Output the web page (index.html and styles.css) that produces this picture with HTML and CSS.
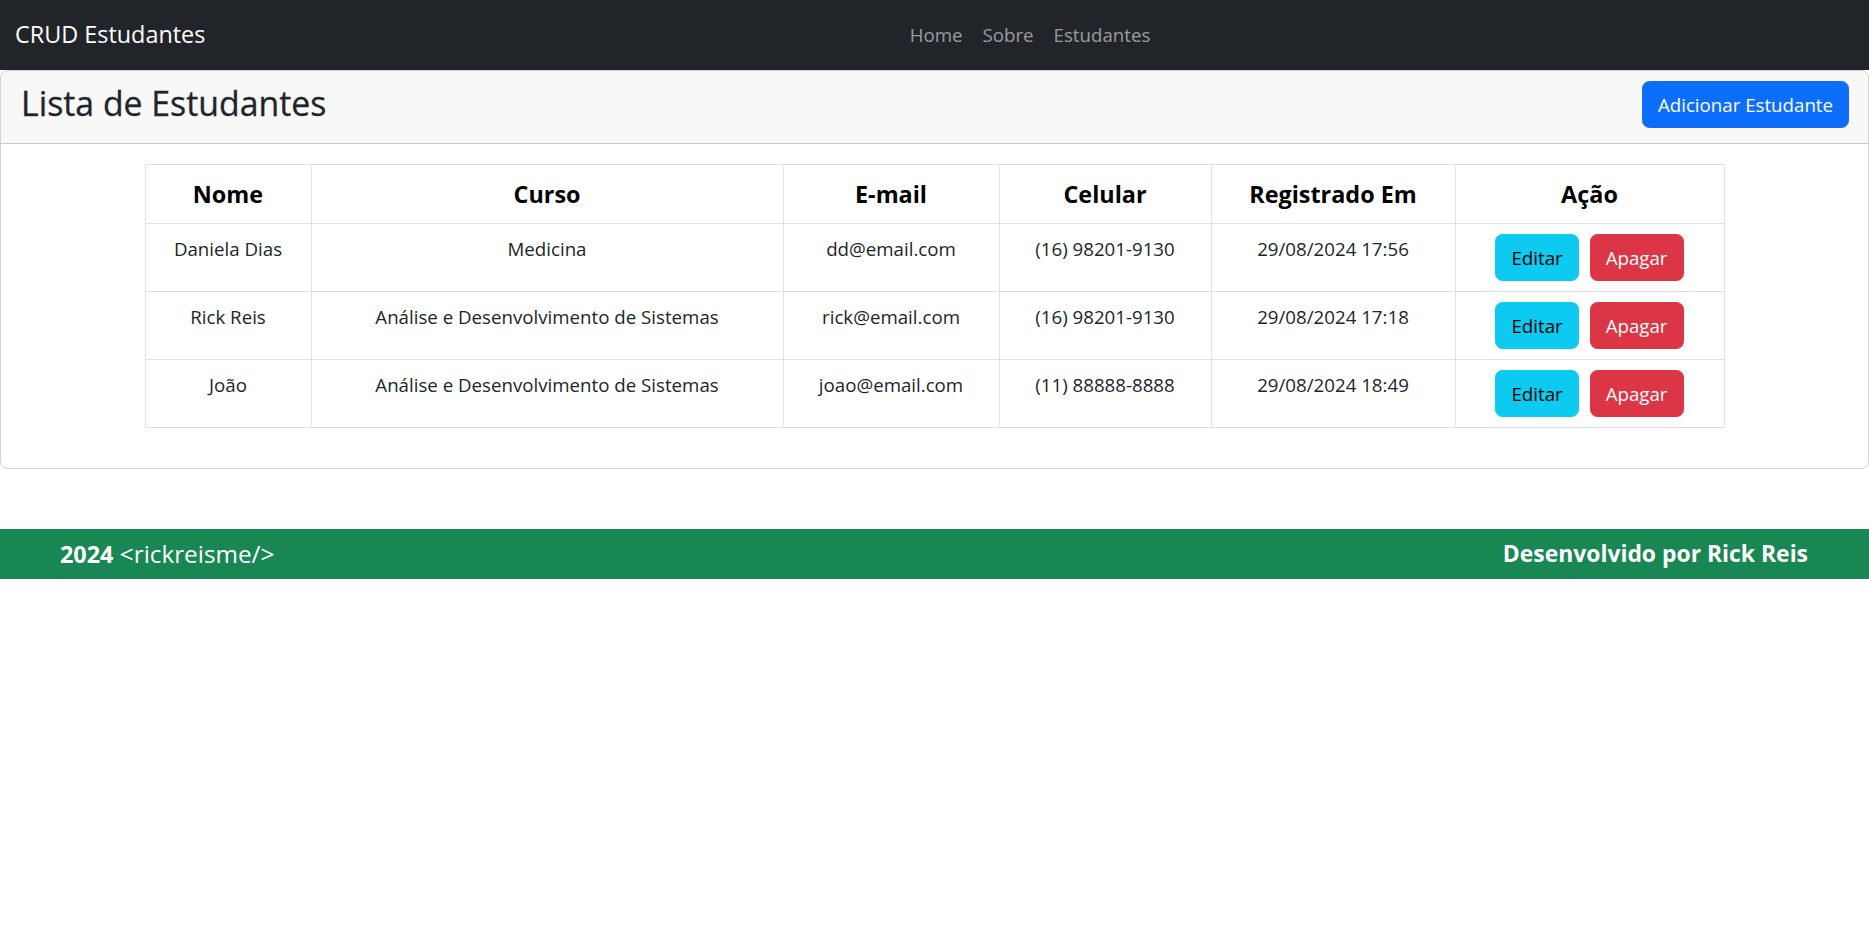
FILE: index.html
```html
<!DOCTYPE html>
<html lang="pt-BR">
<head>
<meta charset="utf-8">
<title>CRUD Estudantes</title>
<link rel="stylesheet" href="styles.css">
</head>
<body>
<nav class="navbar">
  <a class="brand" href="#">CRUD Estudantes</a>
  <ul class="nav">
    <li><a class="nav-link" href="#">Home</a></li>
    <li><a class="nav-link" href="#">Sobre</a></li>
    <li><a class="nav-link" href="#">Estudantes</a></li>
  </ul>
</nav>

<main class="card">
  <div class="card-header">
    <h2 class="title">Lista de Estudantes</h2>
    <a class="btn btn-primary" href="#">Adicionar Estudante</a>
  </div>
  <div class="card-body">
    <table class="table">
      <colgroup>
        <col class="c-nome"><col class="c-curso"><col class="c-email"><col class="c-cel"><col class="c-reg"><col class="c-acao">
      </colgroup>
      <thead>
        <tr>
          <th>Nome</th><th>Curso</th><th>E-mail</th><th>Celular</th><th>Registrado Em</th><th>Ação</th>
        </tr>
      </thead>
      <tbody>
        <tr>
          <td>Daniela Dias</td><td>Medicina</td><td>dd@email.com</td><td>(16) 98201-9130</td><td>29/08/2024 17:56</td>
          <td><div class="actions"><a class="btn btn-info" href="#">Editar</a><a class="btn btn-danger" href="#">Apagar</a></div></td>
        </tr>
        <tr>
          <td>Rick Reis</td><td>Análise e Desenvolvimento de Sistemas</td><td>rick@email.com</td><td>(16) 98201-9130</td><td>29/08/2024 17:18</td>
          <td><div class="actions"><a class="btn btn-info" href="#">Editar</a><a class="btn btn-danger" href="#">Apagar</a></div></td>
        </tr>
        <tr>
          <td>João</td><td>Análise e Desenvolvimento de Sistemas</td><td>joao@email.com</td><td>(11) 88888-8888</td><td>29/08/2024 18:49</td>
          <td><div class="actions"><a class="btn btn-info" href="#">Editar</a><a class="btn btn-danger" href="#">Apagar</a></div></td>
        </tr>
      </tbody>
    </table>
  </div>
</main>

<footer class="footer">
  <p class="foot-left"><strong>2024</strong> &lt;rickreisme/&gt;</p>
  <p class="foot-right">Desenvolvido por Rick Reis</p>
</footer>
</body>
</html>
```
FILE: styles.css
```css
* { box-sizing: border-box; }
html, body { margin: 0; padding: 0; }
body {
  font-family: "Open Sans", "Noto Sans", sans-serif;
  font-size: 18.7px;
  line-height: 30px;
  color: #212529;
  background: #fff;
}
a { text-decoration: none; }

.navbar {
  height: 70px;
  background: #212529;
  display: flex;
  align-items: center;
  padding: 10px 15px;
}
.brand {
  flex: 0 0 191px;
  margin-right: 20px;
  color: #fff;
  font-size: 23.4px;
  line-height: 37.5px;
  white-space: nowrap;
}
.nav {
  flex: 1;
  display: flex;
  justify-content: center;
  list-style: none;
  margin: 0;
  padding: 0 20px 0 0;
}
.nav-link {
  display: block;
  padding: 5px 10px;
  color: rgba(255,255,255,.55);
}

.card {
  display: block;
  border: 1px solid rgba(0,0,0,.175);
  border-radius: 7.5px;
  margin: 0;
}
.card-header {
  display: flex;
  justify-content: space-between;
  align-items: flex-start;
  padding: 10px 19px 14.5px 20px;
  background: rgba(33,37,41,.03);
  border-bottom: 1px solid rgba(0,0,0,.175);
  border-radius: 6.5px 6.5px 0 0;
}
.title {
  margin: 0;
  font-size: 33.8px;
  font-weight: 500;
  line-height: 44px;
  color: #212529;
  -webkit-text-stroke: 0.3px #212529;
}
.card-body {
  padding: 20px 20px;
}

.btn {
  display: inline-block;
  padding: 7.5px 15px;
  font-size: 18.7px;
  line-height: 30px;
  border: 1px solid transparent;
  border-radius: 7.5px;
  text-align: center;
  white-space: nowrap;
}
.btn-primary { background: #0d6efd; border-color: #0d6efd; color: #fff; }
.btn-info { background: #0dcaf0; border-color: #0dcaf0; color: #000; }
.btn-danger { background: #dc3545; border-color: #dc3545; color: #fff; }

.table {
  width: 1579px;
  margin: 0 auto 20px;
  border-collapse: collapse;
  table-layout: fixed;
}
.c-nome { width: 166px; }
.c-curso { width: 472px; }
.c-email { width: 216px; }
.c-cel { width: 212px; }
.c-reg { width: 244px; }
.c-acao { width: 269px; }
.table th, .table td {
  border: 1px solid #dee2e6;
  padding: 10px;
  text-align: center;
  vertical-align: top;
}
.table th {
  font-size: 23.4px;
  line-height: 38.5px;
  font-weight: 700;
  color: #000;
}
.table td { color: #212529; }
.actions {
  display: flex;
  justify-content: center;
  gap: 11px;
}

.footer {
  margin-top: 60px;
  background: #198754;
  color: #fff;
  display: flex;
  justify-content: space-between;
  align-items: center;
  padding: 10px 61px 10px 60px;
  line-height: 30px;
}
.footer p { margin: 0; }
.foot-left { font-size: 24.3px; }
.foot-left strong { font-weight: 700; font-size: 23.4px; }
.foot-right { font-weight: 700; font-size: 22.9px; }
```
